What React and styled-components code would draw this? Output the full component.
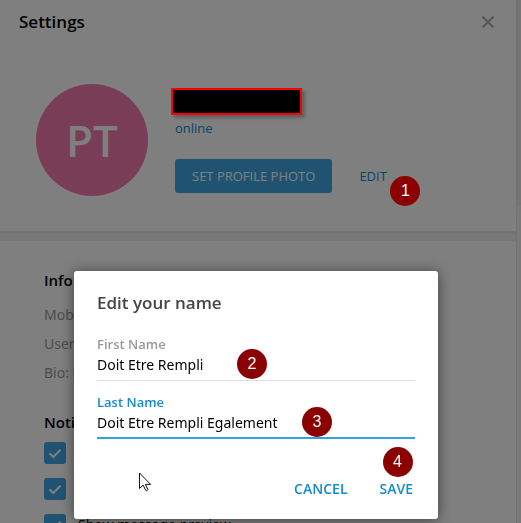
import React from "react";
import styled, { createGlobalStyle } from "styled-components";

const GlobalStyle = createGlobalStyle`
  *, *::before, *::after { box-sizing: border-box; }
  body {
    margin: 0;
    background: #fff;
    color: #000;
    font-family: "Open Sans", "Noto Sans", sans-serif;
    font-size: 14px;
    line-height: 20px;
  }
  button, input { font: inherit; color: inherit; }
  h1, h2, p { margin: 0; }
`;

const Page = styled.div`
  display: grid;
  grid-template-columns: minmax(0, 1fr) 5px;
  height: 100vh;
  overflow: hidden;
`;

const Settings = styled.main`
  display: flex;
  flex-direction: column;
  min-width: 0;
`;

const EdgeStrip = styled.aside`
  display: flex;
  flex-direction: column;
  background: #f2f2f2;
  border-left: 1px solid #e4e4e4;
`;

const EdgeBlock = styled.div`
  height: 203px;
  box-shadow: inset 3px 0 3px #e6e6e6;
`;

const Gap = styled.div`
  flex: none;
  height: 10px;
  background: #f0f0f0;
  box-shadow: inset 0 2px 1px #e6e6e6;
`;

const Header = styled.header`
  display: flex;
  align-items: center;
  justify-content: space-between;
  height: 44px;
  padding: 0 17px 0 19px;
`;

const PageTitle = styled.h1`
  font-size: 17px;
  font-weight: 600;
  line-height: 24px;
`;

const CloseButton = styled.button`
  display: flex;
  padding: 5px;
  border: 0;
  background: none;
  color: #aaa;
`;

const Profile = styled.section`
  display: flex;
  gap: 27px;
  padding: 40px 36px 35px;
`;

const Avatar = styled.div`
  display: grid;
  place-items: center;
  flex: none;
  width: 112px;
  height: 112px;
  border-radius: 50%;
  background: #f27bae;
  color: #fff;
  font-size: 44px;
  font-weight: 600;
  line-height: 60px;
`;

const Identity = styled.div`
  display: flex;
  flex-direction: column;
`;

const HiddenName = styled.div`
  position: relative;
  z-index: 2;
  width: 131px;
  height: 27px;
  margin: 4px 0 3px -4px;
  border: 2px solid #f00;
  background: #000;
  box-shadow: 3px 3px 3px rgba(0, 0, 0, 0.25);
`;

const Status = styled.p`
  color: #168acd;
  font-size: 13px;
`;

const Actions = styled.div`
  display: flex;
  gap: 11px;
  margin-top: 21px;
`;

const ActionButton = styled.button`
  position: relative;
  height: 34px;
  padding: 0 ${(p) => (p.$filled ? 17 : 16)}px;
  border: 0;
  border-radius: 3px;
  background: ${(p) => (p.$filled ? "#40a7e3" : "transparent")};
  color: ${(p) => (p.$filled ? "#fff" : "#168acd")};
  font-size: 13px;
  font-weight: 500;
  white-space: nowrap;
`;

const Section = styled.section`
  padding: ${(p) => p.$top}px 44px 0;
`;

const SectionTitle = styled.h2`
  font-size: 15px;
  font-weight: 600;
  line-height: 20px;
`;

const InfoList = styled.div`
  display: flex;
  flex-direction: column;
  gap: 9px;
  margin-top: 15px;
  color: #999;
  font-family: "Noto Sans", "Open Sans", sans-serif;
`;

const Options = styled.div`
  display: flex;
  flex-direction: column;
  gap: 14px;
  margin-top: 10px;
  font-family: "Noto Sans", "Open Sans", sans-serif;
`;

const Option = styled.label`
  display: flex;
  gap: 12px;
  line-height: 22px;
  white-space: nowrap;
`;

const Tick = styled.span`
  display: grid;
  flex: none;
  width: 22px;
  height: 22px;
  border-radius: 3px;
  background: #40a7e3;

  input, svg { grid-area: 1 / 1; }
  input {
    width: 22px;
    height: 22px;
    margin: 0;
    opacity: 0;
  }
`;

const Overlay = styled.div`
  position: fixed;
  inset: 0;
  z-index: 1;
  display: flex;
  align-items: flex-end;
  justify-content: center;
  padding: 0 9px 4px 0;
  background: rgba(0, 0, 0, 0.5);
`;

const Dialog = styled.form`
  width: 100%;
  max-width: 364px;
  padding: 20px 23px 13px;
  border-radius: 3px;
  background: #fff;
  box-shadow: 0 1px 14px rgba(0, 0, 0, 0.5);
`;

const DialogTitle = styled.h2`
  color: #444;
  font-size: 17px;
  font-weight: 600;
  line-height: 24px;
`;

const Field = styled.div`
  position: relative;
  display: flex;
  flex-direction: column;
  margin-top: ${(p) => p.$top}px;

  label {
    color: ${(p) => (p.$active ? "#168acd" : "#999")};
    font-size: 13px;
    font-weight: 600;
    line-height: 20px;
  }
  input {
    width: 100%;
    height: 27px;
    padding: 0 0 5px;
    border: 0;
    border-bottom: ${(p) => (p.$active ? "2px solid #37a1de" : "1px solid #e0e0e0")};
    border-radius: 0;
    outline: 0;
    background: transparent;
    color: #000;
    font-family: "Noto Sans", "Open Sans", sans-serif;
    font-size: 14px;
  }
`;

const DialogActions = styled.div`
  display: flex;
  justify-content: flex-end;
  margin: 33px -14px 0 0;

  button {
    font-size: 14px;
    font-weight: 600;
  }
`;

const Badge = styled.span`
  position: absolute;
  z-index: 2;
  left: ${(p) => p.$left}px;
  top: ${(p) => p.$top}px;
  display: grid;
  place-items: center;
  width: 30px;
  height: 30px;
  border-radius: 50%;
  background: #8b0000;
  color: #fff;
  font-family: "Liberation Sans", Arial, sans-serif;
  font-size: 16px;
  font-weight: 400;
  line-height: 30px;
`;

const Pointer = styled.svg`
  position: absolute;
  left: 42px;
  top: 80px;
  pointer-events: none;
`;

function Checkbox({ label }) {
  return (
    <Option>
      <Tick>
        <input type="checkbox" defaultChecked />
        <svg width="22" height="22" viewBox="0 0 22 22" fill="none" stroke="#fff" strokeWidth="2" aria-hidden="true">
          <path d="M5.5 11.2 9.3 15 16.5 7.7" />
        </svg>
      </Tick>
      {label}
    </Option>
  );
}

export default function App() {
  return (
    <>
      <GlobalStyle />
      <Page>
        <Settings>
          <Header>
            <PageTitle>Settings</PageTitle>
            <CloseButton type="button" aria-label="Close">
              <svg width="12" height="12" viewBox="0 0 12 12" stroke="currentColor" strokeWidth="2">
                <path d="M.5.5l11 11M11.5.5l-11 11" />
              </svg>
            </CloseButton>
          </Header>
          <Profile>
            <Avatar>PT</Avatar>
            <Identity>
              <HiddenName />
              <Status>online</Status>
              <Actions>
                <ActionButton type="button" $filled>SET PROFILE PHOTO</ActionButton>
                <ActionButton type="button">
                  EDIT
                  <Badge $left={47} $top={17}>1</Badge>
                </ActionButton>
              </Actions>
            </Identity>
          </Profile>
          <Gap />
          <Section $top={29}>
            <SectionTitle>Info</SectionTitle>
            <InfoList>
              <p>Mobile:</p>
              <p>Username:</p>
              <p>Bio: None</p>
            </InfoList>
          </Section>
          <Section $top={29}>
            <SectionTitle>Notifications</SectionTitle>
            <Options>
              <Checkbox label="Desktop notifications" />
              <Checkbox label="Show sender's name" />
              <Checkbox label="Show message preview" />
            </Options>
          </Section>
        </Settings>
        <EdgeStrip>
          <EdgeBlock />
          <Gap />
        </EdgeStrip>
      </Page>
      <Overlay>
        <Dialog role="dialog" aria-labelledby="dialog-title" onSubmit={(e) => e.preventDefault()}>
          <DialogTitle id="dialog-title">Edit your name</DialogTitle>
          <Field $top={19}>
            <label htmlFor="first-name">First Name</label>
            <input id="first-name" defaultValue="Doit Etre Rempli" />
            <Badge $left={140} $top={15}>2</Badge>
          </Field>
          <Field $top={11} $active>
            <label htmlFor="last-name">Last Name</label>
            <input id="last-name" defaultValue="Doit Etre Rempli Egalement" />
            <Badge $left={205} $top={15}>3</Badge>
            <Pointer width="13" height="20" viewBox="0 0 13 20" aria-hidden="true">
              <path d="M.5 1v15.5l3.6-3.4 2.6 5.2c.8 1 2.4.3 2.1-.9l-2.4-5h5.2z" fill="#fff" stroke="#111" />
            </Pointer>
          </Field>
          <DialogActions>
            <ActionButton type="button">CANCEL</ActionButton>
            <ActionButton type="submit">
              SAVE
              <Badge $left={19} $top={-25}>4</Badge>
            </ActionButton>
          </DialogActions>
        </Dialog>
      </Overlay>
    </>
  );
}
